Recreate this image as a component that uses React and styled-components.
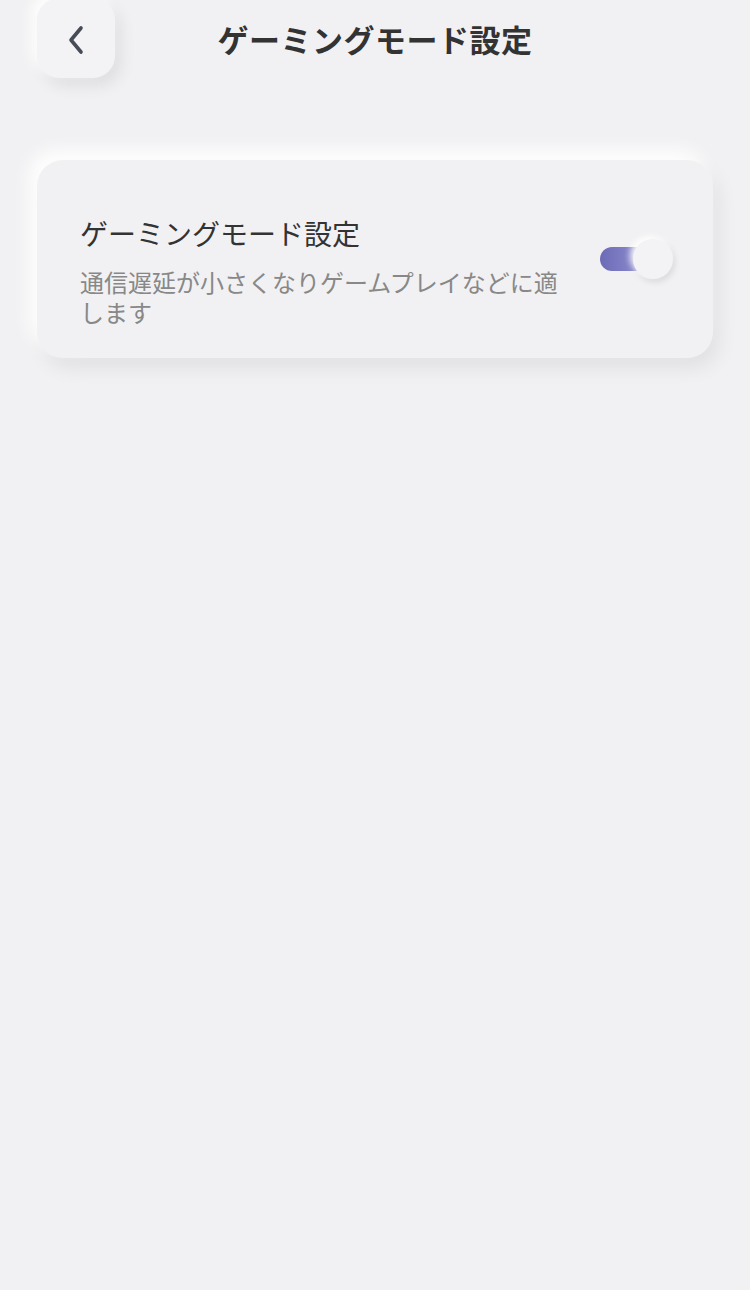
import React, { useState } from 'react';
import styled, { createGlobalStyle } from 'styled-components';

const GlobalStyle = createGlobalStyle`
    html, body {
        margin: 0;
        padding: 0;
        background: #f1f1f3;
    }
    body {
        font-family: "Noto Sans CJK JP", "Noto Sans", sans-serif;
        color: #333;
    }
`;

const Page = styled.div`
    min-height: 1290px;
    background: #f1f1f3;
`;

const Header = styled.header`
    position: relative;
    height: 78px;
    display: flex;
    align-items: center;
    justify-content: center;
`;

const BackButton = styled.button`
    position: absolute;
    left: 37px;
    top: -2px;
    width: 78px;
    height: 80px;
    border: none;
    border-radius: 22px;
    background: #f3f3f5;
    box-shadow: -6px -6px 14px rgba(255, 255, 255, 0.9), 6px 8px 16px rgba(0, 0, 0, 0.08);
    display: flex;
    align-items: center;
    justify-content: center;
    padding: 4px 0 0;
    cursor: pointer;
`;

const Title = styled.h1`
    margin: 0;
    font-size: 31px;
    line-height: 40px;
    font-weight: 700;
    color: #333;
    letter-spacing: 0.5px;
`;

const Content = styled.main`
    padding: 82px 37px 0;
`;

const Card = styled.section`
    display: flex;
    align-items: center;
    justify-content: space-between;
    box-sizing: border-box;
    padding: 43px 40px 31px 43px;
    border-radius: 26px;
    background: #f1f1f3;
    box-shadow: -8px -10px 18px rgba(255, 255, 255, 0.95), 6px 10px 20px rgba(0, 0, 0, 0.07);
`;

const TextBlock = styled.div`
    max-width: 490px;
    padding-top: 12px;
`;

const ItemTitle = styled.div`
    font-size: 28px;
    line-height: 36px;
    color: #333;
`;

const ItemDesc = styled.div`
    margin-top: 16px;
    font-size: 24px;
    line-height: 30px;
    color: #888;
`;

const Toggle = styled.button`
    position: relative;
    width: 73px;
    height: 44px;
    margin-bottom: 12px;
    border: none;
    background: transparent;
    padding: 0;
    cursor: pointer;
    flex-shrink: 0;
`;

const Track = styled.span`
    position: absolute;
    left: 0;
    top: 10px;
    width: 58px;
    height: 24px;
    border-radius: 12px;
    background: ${p => (p.$on ? 'linear-gradient(90deg, #6c6bb6 0%, #8483c9 55%, rgba(240,240,245,0.9) 100%)' : '#dcdce2')};
`;

const Knob = styled.span`
    position: absolute;
    top: 2px;
    left: ${p => (p.$on ? '33px' : '0px')};
    width: 40px;
    height: 40px;
    border-radius: 50%;
    background: #f3f3f5;
    box-shadow: -3px -3px 6px rgba(255, 255, 255, 0.9), 2px 3px 6px rgba(0, 0, 0, 0.1);
`;

const ChevronLeft = () => (
    <svg width="22" height="32" viewBox="0 0 22 32" fill="none">
        <path d="M16 4 L6 16 L16 28" stroke="#474b55" strokeWidth="3.6" strokeLinecap="round" strokeLinejoin="round" />
    </svg>
);

const App = () => {
    const [on, setOn] = useState(true);
    return (
        <Page>
            <GlobalStyle />
            <Header>
                <BackButton aria-label="戻る">
                    <ChevronLeft />
                </BackButton>
                <Title>ゲーミングモード設定</Title>
            </Header>
            <Content>
                <Card>
                    <TextBlock>
                        <ItemTitle>ゲーミングモード設定</ItemTitle>
                        <ItemDesc>通信遅延が小さくなりゲームプレイなどに適します</ItemDesc>
                    </TextBlock>
                    <Toggle onClick={() => setOn(!on)} aria-pressed={on}>
                        <Track $on={on} />
                        <Knob $on={on} />
                    </Toggle>
                </Card>
            </Content>
        </Page>
    );
};

export default App;
